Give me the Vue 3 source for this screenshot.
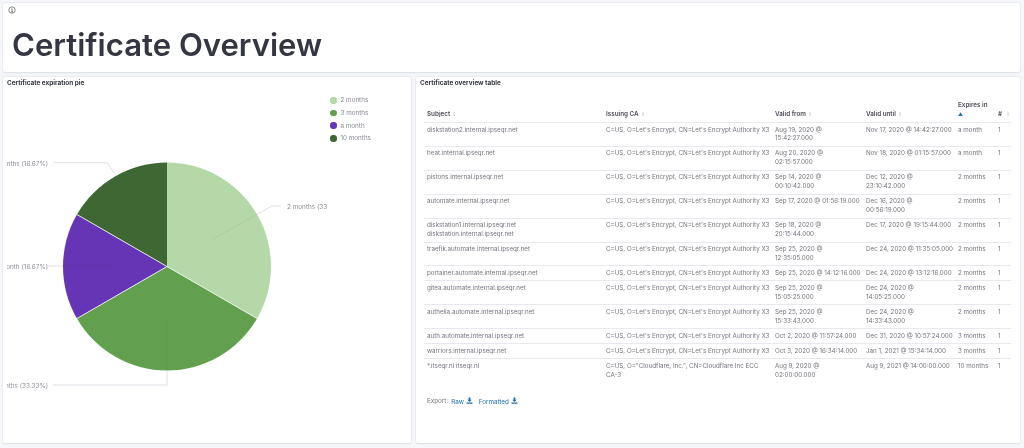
<script setup>
const legend = [
  { label: '2 months', color: '#b5d8a8' },
  { label: '3 months', color: '#62a050' },
  { label: 'a month', color: '#6535b5' },
  { label: '10 months', color: '#3f6733' },
]
const LE = "C=US, O=Let's Encrypt, CN=Let's Encrypt Authority X3"
const rows = [
  ['diskstation2.internal.ipseqr.net', LE, 'Aug 19, 2020 @\n15:42:27.000', 'Nov 17, 2020 @ 14:42:27.000', 'a month', '1'],
  ['heat.internal.ipseqr.net', LE, 'Aug 20, 2020 @\n02:15:57.000', 'Nov 18, 2020 @ 01:15:57.000', 'a month', '1'],
  ['pistons.internal.ipseqr.net', LE, 'Sep 14, 2020 @\n00:10:42.000', 'Dec 12, 2020 @\n23:10:42.000', '2 months', '1'],
  ['automate.internal.ipseqr.net', LE, 'Sep 17, 2020 @ 01:56:19.000', 'Dec 16, 2020 @\n00:56:19.000', '2 months', '1'],
  ['diskstation1.internal.ipseqr.net\ndiskstation.internal.ipseqr.net', LE, 'Sep 18, 2020 @\n20:15:44.000', 'Dec 17, 2020 @ 19:15:44.000', '2 months', '1'],
  ['traefik.automate.internal.ipseqr.net', LE, 'Sep 25, 2020 @\n12:35:05.000', 'Dec 24, 2020 @ 11:35:05.000', '2 months', '1'],
  ['portainer.automate.internal.ipseqr.net', LE, 'Sep 25, 2020 @ 14:12:16.000', 'Dec 24, 2020 @ 13:12:16.000', '2 months', '1'],
  ['gitea.automate.internal.ipseqr.net', LE, 'Sep 25, 2020 @\n15:05:25.000', 'Dec 24, 2020 @\n14:05:25.000', '2 months', '1'],
  ['authelia.automate.internal.ipseqr.net', LE, 'Sep 25, 2020 @\n15:33:43.000', 'Dec 24, 2020 @\n14:33:43.000', '2 months', '1'],
  ['auth.automate.internal.ipseqr.net', LE, 'Oct 2, 2020 @ 11:57:24.000', 'Dec 31, 2020 @ 10:57:24.000', '3 months', '1'],
  ['warriors.internal.ipseqr.net', LE, 'Oct 3, 2020 @ 16:34:14.000', 'Jan 1, 2021 @ 15:34:14.000', '3 months', '1'],
  ['*.itseqr.nl itseqr.nl', 'C=US, O="Cloudflare, Inc.", CN=Cloudflare Inc ECC\nCA-3', 'Aug 9, 2020 @\n02:00:00.000', 'Aug 9, 2021 @ 14:00:00.000', '10 months', '1'],
]
const heads = ['Subject', 'Issuing CA', 'Valid from', 'Valid until']
</script>

<template>
  <div class="page">
    <section class="panel header">
      <svg class="info" viewBox="0 0 8 8" width="8" height="8">
        <circle cx="4" cy="4" r="3.2" fill="none" stroke="#555" stroke-width=".7" />
        <path d="M3.3 3.5H4.2V6M3.2 6H5M4 1.9V2.6" fill="none" stroke="#555" stroke-width=".7" />
      </svg>
      <h1>Certificate Overview</h1>
    </section>
    <div class="columns">
      <section class="panel pie-panel">
        <h2>Certificate expiration pie</h2>
        <ul class="legend">
          <li v-for="item in legend" :key="item.label">
            <span class="dot" :style="{ background: item.color }"></span>{{ item.label }}
          </li>
        </ul>
        <svg class="pie" viewBox="0 0 408 366" width="408" height="366">
          <defs>
            <clipPath id="pieclip"><rect x="4" y="0" width="320" height="366" /></clipPath>
          </defs>
          <g transform="translate(-3 -77)">
            <path d="M167 266.5V162.5A104 104 0 0 1 257.07 318.5Z" fill="#b5d8a8" />
            <path d="M167 266.5L257.07 318.5A104 104 0 0 1 76.93 318.5Z" fill="#62a050" />
            <path d="M167 266.5L76.93 318.5A104 104 0 0 1 76.93 214.5Z" fill="#6535b5" />
            <path d="M167 266.5L76.93 214.5A104 104 0 0 1 167 162.5Z" fill="#3f6733" />
            <path d="M167 266.5L257.07 318.5M167 266.5L76.93 318.5M167 266.5L76.93 214.5" stroke="#fff" stroke-width=".9" fill="none" opacity=".9" />
            <g fill="none" stroke="#d3d7de" stroke-width=".8">
              <path d="M257 214.4L272 206H281" />
              <path d="M116 175.6L107 162.7H53" />
              <path d="M63 266H48" />
              <path d="M167 370.5V385H53" />
            </g>
            <g fill="none" stroke="rgba(40,60,40,.09)" stroke-width=".8">
              <path d="M213 239L257 214.4" />
              <path d="M138 215L116 175.6" />
              <path d="M112 266H63" />
              <path d="M167 320V370.5" />
            </g>
          </g>
          <g clip-path="url(#pieclip)" class="labels">
            <text x="45" y="88.5" text-anchor="end">10 months (16.67%)</text>
            <text x="45" y="191.5" text-anchor="end">a month (16.67%)</text>
            <text x="45" y="310.5" text-anchor="end">3 months (33.33%)</text>
            <text x="284" y="131.5">2 months (33.33%)</text>
          </g>
        </svg>
      </section>
      <section class="panel table-panel">
        <h2>Certificate overview table</h2>
        <table>
          <colgroup>
            <col class="c1" /><col class="c2" /><col class="c3" /><col class="c4" /><col class="c5" /><col class="c6" />
          </colgroup>
          <thead>
            <tr>
              <th v-for="h in heads" :key="h">{{ h }}<span class="sort">⇕</span></th>
              <th>Expires in<br /><span class="sort active">▲</span></th>
              <th># <span class="sort">⇕</span></th>
            </tr>
          </thead>
          <tbody>
            <tr v-for="row in rows" :key="row[0]">
              <td v-for="(cell, i) in row" :key="i">{{ cell }}</td>
            </tr>
          </tbody>
        </table>
        <p class="export">
          <span class="export-label">Export:</span>
          <a>Raw
            <svg viewBox="0 0 8 8" width="7" height="7"><path d="M3 .5H5V3.2H6.6L4 5.8 1.4 3.2H3ZM.6 6.4H7.4V7.6H.6Z" fill="#1f6fa8" /></svg>
          </a>
          <a>Formatted
            <svg viewBox="0 0 8 8" width="7" height="7"><path d="M3 .5H5V3.2H6.6L4 5.8 1.4 3.2H3ZM.6 6.4H7.4V7.6H.6Z" fill="#1f6fa8" /></svg>
          </a>
        </p>
      </section>
    </div>
  </div>
</template>

<style>
html, body { margin: 0; background: #f5f7fa; }
</style>

<style scoped>
.page {
  width: 1024px;
  height: 448px;
  box-sizing: border-box;
  padding: 3px 4px 5px 3px;
  display: flex;
  flex-direction: column;
  gap: 5px;
  overflow: hidden;
  background: #f5f7fa;
  font-family: Inter, "Liberation Sans", sans-serif;
  filter: blur(.3px);
}
.panel {
  background: #fff;
  border-radius: 2px;
  box-shadow: 0 0 0 .5px #e2e6ec, 0 .5px 1.5px rgba(90, 105, 130, .18);
  box-sizing: border-box;
}
.header {
  height: 69px;
  flex: none;
  padding: 3px 0 0 5px;
}
.info { display: block; }
h1 {
  margin: 11px 0 0 4px;
  font-size: 31.1px;
  line-height: 40px;
  font-weight: 600;
  color: #343741;
}
.columns {
  flex: 1;
  display: flex;
  gap: 5px;
  min-height: 0;
}
.pie-panel {
  width: 408px;
  position: relative;
}
.table-panel {
  flex: 1;
  padding: 0 9px 0 8px;
}
h2 {
  margin: 0;
  font-size: 6.4px;
  line-height: 9px;
  font-weight: 700;
  color: #343741;
}
.pie-panel h2 { position: relative; padding: 2px 0 0 4px; z-index: 1; }
.table-panel h2 { padding-top: 2px; margin-left: -4px; }
.pie { position: absolute; left: 0; top: 0; }
.labels { font-size: 6.4px; fill: #8d9098; }
.legend {
  position: absolute;
  z-index: 1;
  left: 327px;
  top: 17px;
  margin: 0;
  padding: 0;
  list-style: none;
  font-size: 6.3px;
  color: #868a92;
}
.legend li {
  display: flex;
  align-items: center;
  height: 12.7px;
}
.dot {
  width: 6.5px;
  height: 6.5px;
  border-radius: 50%;
  margin-right: 4px;
}
table {
  margin-top: 7px;
  width: 587px;
  table-layout: fixed;
  border-collapse: collapse;
  font-size: 6.25px;
  line-height: 8.9px;
}
.c1 { width: 179px; }
.c2 { width: 169px; }
.c3 { width: 91px; }
.c4 { width: 92px; }
.c5 { width: 40px; }
.c6 { width: 16px; }
th {
  height: 24px;
  padding: 0 3px 3px;
  vertical-align: bottom;
  text-align: left;
  font-weight: 600;
  color: #4c4f57;
  white-space: nowrap;
  font-size: 6.3px;
}
td {
  padding: 2.55px 3px;
  vertical-align: top;
  border-top: 1px solid #e6e9ee;
  color: #73767e;
  white-space: pre;
}
.sort {
  margin-left: 2px;
  color: #c4c8cf;
  font-size: 5px;
  font-weight: 400;
}
.sort.active { margin: 0; color: #1f6fa8; }
.export {
  margin: 15px 0 0 3px;
  font-size: 6.3px;
  line-height: 9px;
  color: #73767e;
  display: flex;
  gap: 6px;
}
.export-label { margin-right: -3px; }
.export a { color: #1f6fa8; }
.export svg { vertical-align: -.5px; }
</style>
